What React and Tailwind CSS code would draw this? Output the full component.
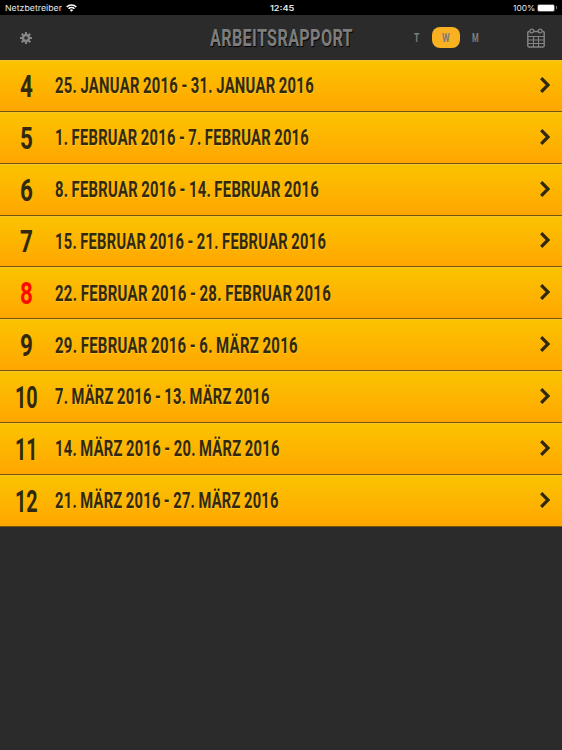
import { useLayoutEffect, useRef, useState } from "react";
import clsx from "clsx";

const weeks = [
  { week: 4, range: "25. JANUAR 2016 - 31. JANUAR 2016", width: 259 },
  { week: 5, range: "1. FEBRUAR 2016 - 7. FEBRUAR 2016", width: 254 },
  { week: 6, range: "8. FEBRUAR 2016 - 14. FEBRUAR 2016", width: 264 },
  { week: 7, range: "15. FEBRUAR 2016 - 21. FEBRUAR 2016", width: 271 },
  { week: 8, range: "22. FEBRUAR 2016 - 28. FEBRUAR 2016", width: 276, current: true },
  { week: 9, range: "29. FEBRUAR 2016 - 6. MÄRZ 2016", width: 243 },
  { week: 10, range: "7. MÄRZ 2016 - 13. MÄRZ 2016", width: 215 },
  { week: 11, range: "14. MÄRZ 2016 - 20. MÄRZ 2016", width: 225 },
  { week: 12, range: "21. MÄRZ 2016 - 27. MÄRZ 2016", width: 224 },
];

// Condenses a line of text to the given width
const Condensed = ({ width, className, children }) => {
  const ref = useRef(null);
  const [scale, setScale] = useState(1);

  useLayoutEffect(() => {
    setScale(width / ref.current.offsetWidth);
  }, [width, children]);

  return (
    <span className="block shrink-0" style={{ width }}>
      <span
        ref={ref}
        className={clsx("inline-block origin-left whitespace-nowrap", className)}
        style={{ transform: `scaleX(${scale})` }}
      >
        {children}
      </span>
    </span>
  );
};

const GearIcon = () => (
  <svg viewBox="0 0 24 24" className="size-3 text-[#858585]">
    <g stroke="currentColor" strokeWidth="4.2">
      <path d="M12 0v6M12 18v6M0 12h6M18 12h6M3.5 3.5l4.3 4.3M16.2 16.2l4.3 4.3M20.5 3.5l-4.3 4.3M7.8 16.2l-4.3 4.3" />
    </g>
    <circle cx="12" cy="12" r="6" fill="none" stroke="currentColor" strokeWidth="4.8" />
  </svg>
);

const CalendarIcon = () => (
  <svg viewBox="0 0 18 20" fill="none" stroke="#828282" className="h-5 w-[18px]">
    <path d="M2.6 3.5H2A1.2 1.2 0 0 0 .8 4.7v13A1.2 1.2 0 0 0 2 18.9h14a1.2 1.2 0 0 0 1.2-1.2v-13A1.2 1.2 0 0 0 16 3.5h-.6M6.6 3.5h4.8" strokeWidth="1.5" />
    <path d="M.8 8.5h16.4M.8 12h16.4M.8 15.5h16.4M6.5 8.5V19M11.5 8.5V19" strokeWidth="1.1" />
    <circle cx="4.8" cy="3" r="1.9" strokeWidth="1.4" />
    <circle cx="13.2" cy="3" r="1.9" strokeWidth="1.4" />
  </svg>
);

const WifiIcon = () => (
  <svg viewBox="0 0 12 9" fill="none" stroke="white" strokeWidth="1.7" className="h-2 w-[11px]">
    <path d="M.6 3.3a7.6 7.6 0 0 1 10.8 0M2.7 5.4a4.7 4.7 0 0 1 6.6 0" />
    <path d="M6 8.7 4.2 6.9a2.6 2.6 0 0 1 3.6 0Z" fill="white" stroke="none" />
  </svg>
);

const StatusBar = () => (
  <div className="grid h-[15px] grid-cols-3 items-center bg-black px-[5px] font-['Inter',sans-serif] text-[8px] leading-none text-[#e8e8e8]">
    <div className="flex items-center gap-1">
      <Condensed width={57}>Netzbetreiber</Condensed>
      <WifiIcon />
    </div>
    <div className="flex justify-center pl-0.5">
      <Condensed width={24} className="font-semibold">12:45</Condensed>
    </div>
    <div className="flex items-center justify-end gap-0.5">
      <Condensed width={22}>100%</Condensed>
      <div className="flex items-center gap-px">
        <div className="h-2 w-[18px] rounded-[2px] border border-[#555]">
          <div className="h-full rounded-[1px] bg-white" />
        </div>
        <div className="h-[3px] w-px bg-[#777]" />
      </div>
    </div>
  </div>
);

const Header = () => (
  <header className="grid h-[45px] grid-cols-[1fr_143px_1fr] items-center bg-[#2b2b2b] text-[#7d7d7d]">
    <div className="pl-5">
      <GearIcon />
    </div>
    <h1 className="text-[24px] leading-none font-bold [text-shadow:1px_1px_1px_#000]">
      <Condensed width={143} className="tracking-[0.5px]">ARBEITSRAPPORT</Condensed>
    </h1>
    <div className="flex items-center justify-between pr-[17px] pl-[61px]">
      <div className="flex items-center text-[12px] leading-none font-bold">
        <Condensed width={5}>T</Condensed>
        <div className="ml-[13px] flex h-[21px] w-7 items-center justify-center rounded-[8px] bg-[#f9b122]">
          <Condensed width={8}>W</Condensed>
        </div>
        <div className="ml-3">
          <Condensed width={7}>M</Condensed>
        </div>
      </div>
      <CalendarIcon />
    </div>
  </header>
);

const WeekRow = ({ week, range, width, current }) => (
  <li className="flex h-[51.85px] items-center border-t border-b border-t-[#f5c62f] border-b-[#76540a] bg-linear-to-b from-[#fbc300] to-[#ffa600] pr-3 text-[#30290f]">
    <div
      className={clsx(
        "flex w-[52px] shrink-0 justify-center pt-px text-[31px] leading-none font-bold",
        current && "text-[#ff0800]",
      )}
    >
      <Condensed width={week > 9 ? 23 : 13}>{week}</Condensed>
    </div>
    <div className="ml-[3px] grow pt-px text-[22px] leading-none font-bold tracking-[0.4px] [word-spacing:-1px] [text-shadow:1px_1px_0_#ffd04599]">
      <Condensed width={width}>{range}</Condensed>
    </div>
    <svg viewBox="0 0 10 16" className="-mt-0.5 h-4 w-2.5" fill="none" stroke="currentColor" strokeWidth="3.2">
      <path d="M1.2 1.2 8 8l-6.8 6.8" />
    </svg>
  </li>
);

const App = () => {
  return (
    <div className="flex h-screen flex-col overflow-hidden bg-[#2b2b2b] font-['Roboto',sans-serif]">
      <StatusBar />
      <Header />
      <ul>
        {weeks.map((item) => (
          <WeekRow key={item.week} {...item} />
        ))}
      </ul>
    </div>
  );
};

export default App;
